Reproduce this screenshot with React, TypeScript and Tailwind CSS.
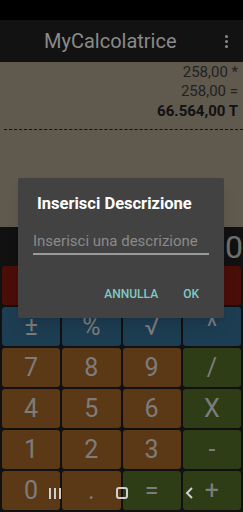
import React from "react";

// keypad rows below the red bar
const rows: { label: string; kind: "blue" | "orange" | "green" }[][] = [
  [
    { label: "±", kind: "blue" },
    { label: "%", kind: "blue" },
    { label: "√", kind: "blue" },
    { label: "^", kind: "blue" },
  ],
  [
    { label: "7", kind: "orange" },
    { label: "8", kind: "orange" },
    { label: "9", kind: "orange" },
    { label: "/", kind: "green" },
  ],
  [
    { label: "4", kind: "orange" },
    { label: "5", kind: "orange" },
    { label: "6", kind: "orange" },
    { label: "X", kind: "green" },
  ],
  [
    { label: "1", kind: "orange" },
    { label: "2", kind: "orange" },
    { label: "3", kind: "orange" },
    { label: "-", kind: "green" },
  ],
  [
    { label: "0", kind: "orange" },
    { label: ".", kind: "orange" },
    { label: "=", kind: "green" },
    { label: "+", kind: "green" },
  ],
];

const kindClass = {
  blue: "bg-[#1d3d52]",
  orange: "bg-[#5c3916]",
  green: "bg-[#2f3d16]",
};

function Key({ label, kind }: { label: string; kind: "blue" | "orange" | "green" }) {
  return (
    <div
      className={`${kindClass[kind]} flex h-[39px] items-center justify-center rounded-[3px] text-[25px] leading-none text-[#7c7c7c]`}
    >
      {label}
    </div>
  );
}

export default function App() {
  return (
    <div
      className="relative flex h-[512px] w-[243px] flex-col overflow-hidden bg-[#111111]"
      style={{ fontFamily: "Roboto, 'Liberation Sans', sans-serif" }}
    >
      {/* status bar */}
      <div className="h-[20px] bg-black" />

      {/* app bar */}
      <div className="flex h-[42px] items-center bg-[#121212]">
        <div className="flex-1 pl-[44px] text-[20px] text-[#8a8a8a]">MyCalcolatrice</div>
        <div className="mr-[15px] flex flex-col gap-[2px]">
          <span className="h-[3px] w-[3px] rounded-full bg-[#8a8a8a]" />
          <span className="h-[3px] w-[3px] rounded-full bg-[#8a8a8a]" />
          <span className="h-[3px] w-[3px] rounded-full bg-[#8a8a8a]" />
        </div>
      </div>

      {/* tape */}
      <div className="flex h-[165px] flex-col bg-[#5f594e] pt-[1px]">
        <div className="pr-[5px] text-right text-[15px] leading-[19px] text-[#222]">258,00 *</div>
        <div className="pr-[5px] text-right text-[15px] leading-[19px] text-[#222]">258,00 =</div>
        <div className="pr-[5px] text-right text-[15px] font-bold leading-[21px] text-[#111]">
          66.564,00 T
        </div>
        <div className="ml-[4px] mt-[7px] border-t border-dashed border-[#111]" />
      </div>

      {/* display */}
      <div className="flex h-[39px] items-center justify-end overflow-hidden">
        <span className="text-[32px] leading-none text-[#6f6f6f]">0</span>
      </div>

      {/* keypad */}
      <div className="grid grid-cols-4 gap-[2px] px-[2px]">
        <div className="h-[39px] rounded-[3px] bg-[#4a0e09]" />
        <div className="h-[39px] rounded-[3px] bg-[#4a0e09]" />
        <div className="h-[39px] rounded-[3px] bg-[#4a0e09]" />
        <div className="flex h-[39px] items-center justify-center rounded-[3px] bg-[#4a0e09]">
          <svg width="16" height="18" viewBox="0 0 16 18">
            <rect x="2" y="2" width="12" height="14" rx="2" fill="#6b5a16" />
            <rect x="4" y="6" width="8" height="6" fill="#24415a" />
          </svg>
        </div>
        {rows.flat().map((k, i) => (
          <Key key={i} label={k.label} kind={k.kind} />
        ))}
      </div>

      {/* navigation bar icons */}
      <div className="absolute bottom-[13px] left-[49px] flex gap-[3px]">
        <span className="h-[11px] w-[2px] bg-[#cfcfcf]" />
        <span className="h-[11px] w-[2px] bg-[#cfcfcf]" />
        <span className="h-[11px] w-[2px] bg-[#cfcfcf]" />
      </div>
      <div className="absolute bottom-[13px] left-[116px] h-[12px] w-[12px] rounded-[3px] border-2 border-[#cfcfcf]" />
      <svg className="absolute bottom-[13px] left-[185px]" width="9" height="12" viewBox="0 0 9 12">
        <path d="M7 1 L2 6 L7 11" stroke="#cfcfcf" strokeWidth="2" fill="none" />
      </svg>

      {/* dialog */}
      <div className="absolute left-[18px] top-[178px] flex h-[140px] w-[206px] flex-col rounded-[2px] bg-[#424242] shadow-lg">
        <div className="pl-[19px] pt-[16px] text-[16.5px] font-bold leading-[20px] text-white">
          Inserisci Descrizione
        </div>
        <div className="mx-[15px] mt-[18px] border-b-2 border-[#9a9a9a] pb-[3px] text-[15px] leading-[18px] text-[#8a8a8a]">
          Inserisci una descrizione
        </div>
        <div className="mt-auto flex justify-end gap-[25px] pb-[17px] pr-[25px] text-[12px] font-medium leading-[14px] text-[#80cbc4]">
          <span>ANNULLA</span>
          <span>OK</span>
        </div>
      </div>
    </div>
  );
}
